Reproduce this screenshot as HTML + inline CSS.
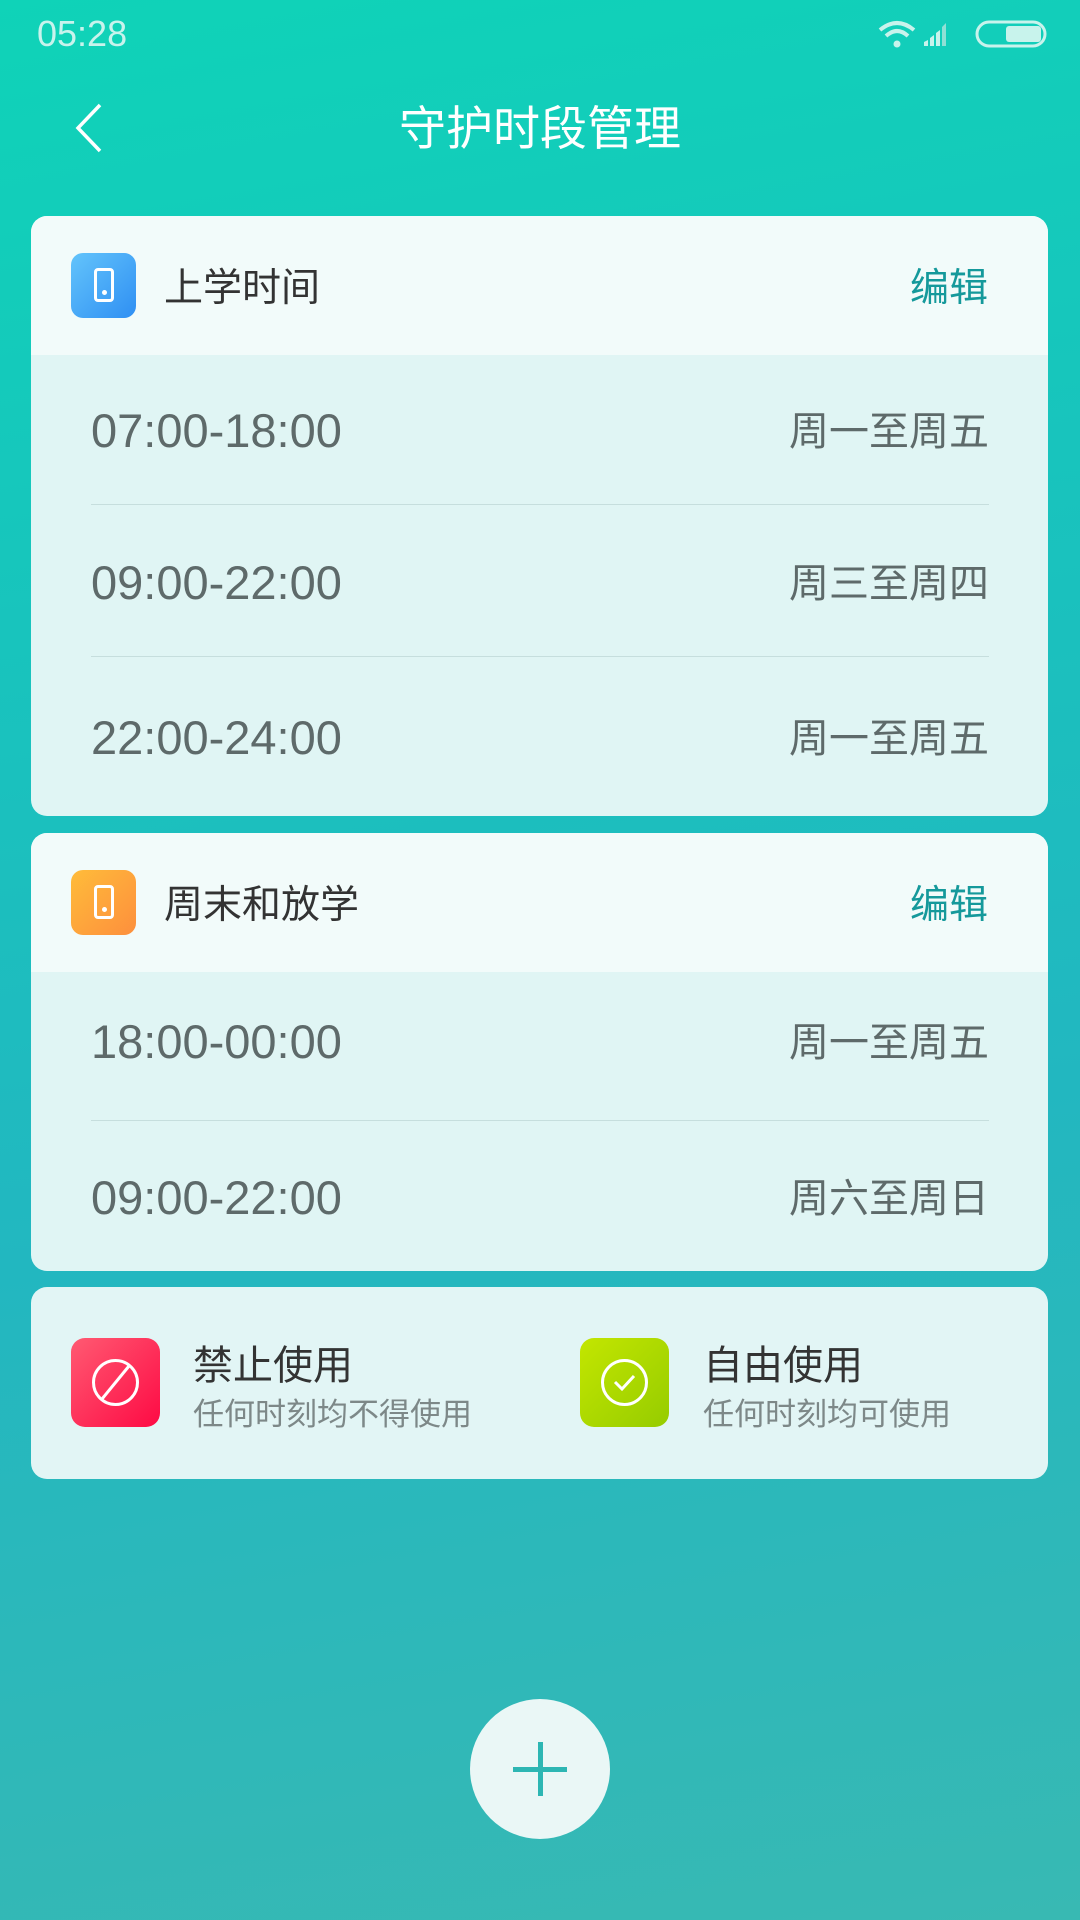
<!DOCTYPE html>
<html><head><meta charset="utf-8"><style>
*{margin:0;padding:0;box-sizing:border-box}
body{width:1080px;height:1920px;overflow:hidden;position:relative;font-family:"Liberation Sans","Noto Sans CJK SC",sans-serif;background:linear-gradient(170deg,#0fd3b8 0%,#18c4bd 30%,#22b7c0 60%,#38b9b3 100%)}
.abs{position:absolute}
.card{position:absolute;left:31px;width:1017px;border-radius:16px;overflow:hidden;background:#e0f5f4}
.hd{height:139px;background:#f2fbfa;position:relative}
.ic{position:absolute;left:40px;top:37px;width:65px;height:65px;border-radius:12px}
.ic i{position:absolute;left:23px;top:15px;width:20px;height:34px;border:3px solid #fff;border-radius:4px}
.ic i:after{content:"";position:absolute;left:5px;bottom:4px;width:5px;height:5px;border-radius:50%;background:#fff}
.ht{position:absolute;left:133px;top:3px;line-height:139px;font-size:39px;color:#333}
.ed{position:absolute;right:60px;top:3px;line-height:139px;font-size:39px;color:#15999b}
.row{position:absolute;left:60px;right:59px;font-size:47px;color:#5e6a6a}
.row span{position:absolute;right:0;font-size:40px;top:-4px}
.dv{position:absolute;left:60px;right:59px;height:1px;background:#c6dedd}
</style></head><body>
<div class="abs" style="left:37px;top:13px;font-size:36px;color:#c8f3ec">05:28</div>
<svg class="abs" style="left:876px;top:18px" width="172" height="32" viewBox="0 0 172 32">
<path d="M4 12 Q21 -2 38 12" stroke="#c8f3ec" stroke-width="4" fill="none"/>
<path d="M10 18 Q21 8 32 18" stroke="#c8f3ec" stroke-width="4" fill="none"/>
<circle cx="21" cy="26" r="3.5" fill="#c8f3ec"/>
<path d="M48 28 L48 24 L52 22 L52 28Z M54 28 V20 L58 17 V28Z M60 28 V15 L64 12 V28Z" fill="#c8f3ec"/>
<path d="M66 28 V9 L70 5 V28Z" fill="#8fe0d5"/>
<rect x="101" y="4" width="68" height="24" rx="12" stroke="#c8f3ec" stroke-width="3" fill="none"/>
<rect x="130" y="8" width="35" height="16" rx="3" fill="#c8f3ec"/>
</svg>
<svg class="abs" style="left:72px;top:102px" width="32" height="52"><path d="M28 3 L6 26 L28 49" stroke="#fff" stroke-width="3.5" fill="none"/></svg>
<div class="abs" style="left:0;width:1080px;top:100px;text-align:center;font-size:47px;color:#fff;line-height:58px">守护时段管理</div>

<div class="card" style="top:216px;height:600px">
<div class="hd"><div class="ic" style="background:linear-gradient(135deg,#63c4fb,#2f8ff3)"><i></i></div><div class="ht">上学时间</div><div class="ed">编辑</div></div>
<div class="row" style="top:187px">07:00-18:00<span>周一至周五</span></div>
<div class="dv" style="top:288px"></div>
<div class="row" style="top:339px">09:00-22:00<span>周三至周四</span></div>
<div class="dv" style="top:440px"></div>
<div class="row" style="top:494px">22:00-24:00<span>周一至周五</span></div>
</div>

<div class="card" style="top:833px;height:438px">
<div class="hd"><div class="ic" style="background:linear-gradient(135deg,#ffbc3a,#fd8f3d)"><i></i></div><div class="ht">周末和放学</div><div class="ed">编辑</div></div>
<div class="row" style="top:181px">18:00-00:00<span>周一至周五</span></div>
<div class="dv" style="top:287px"></div>
<div class="row" style="top:337px">09:00-22:00<span>周六至周日</span></div>
</div>

<div class="card" style="top:1287px;height:192px;background:#e2f5f5">
<div class="abs" style="left:40px;top:51px;width:89px;height:89px;border-radius:14px;background:linear-gradient(135deg,#ff5a72,#fe0a44)">
<svg width="89" height="89"><circle cx="44.5" cy="44.5" r="22" stroke="#fff" stroke-width="3" fill="none"/><path d="M58 28 L31 61" stroke="#fff" stroke-width="3"/></svg></div>
<div class="abs" style="left:162px;top:46px;font-size:40px;color:#333">禁止使用</div>
<div class="abs" style="left:162px;top:102px;font-size:31px;color:#7d8888">任何时刻均不得使用</div>
<div class="abs" style="left:549px;top:51px;width:89px;height:89px;border-radius:14px;background:linear-gradient(135deg,#c3e600,#96cc00)">
<svg width="89" height="89"><circle cx="44.5" cy="44.5" r="22" stroke="#fff" stroke-width="3" fill="none"/><path d="M35 44 L42 51 L54 38" stroke="#fff" stroke-width="3" fill="none"/></svg></div>
<div class="abs" style="left:672px;top:46px;font-size:40px;color:#333">自由使用</div>
<div class="abs" style="left:672px;top:102px;font-size:31px;color:#7d8888">任何时刻均可使用</div>
</div>

<div class="abs" style="left:470px;top:1699px;width:140px;height:140px;border-radius:50%;background:#eaf7f6">
<div class="abs" style="left:43px;top:68px;width:54px;height:5px;background:#2db6b3"></div>
<div class="abs" style="left:68px;top:43px;width:5px;height:54px;background:#2db6b3"></div>
</div>
</body></html>
